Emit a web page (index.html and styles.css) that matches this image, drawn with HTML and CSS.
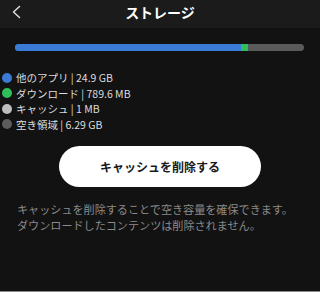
FILE: index.html
```html
<!DOCTYPE html>
<html lang="ja">
<head>
<meta charset="utf-8">
<link rel="stylesheet" href="styles.css">
</head>
<body>
<div class="page">
  <header class="header">
    <svg class="back" width="10" height="14" viewBox="0 0 10 14"><path d="M8.5 1.5 L2.5 7 L8.5 12.5" fill="none" stroke="#ddd" stroke-width="1.5" stroke-linecap="round" stroke-linejoin="round"/></svg>
    <h1 class="title">ストレージ</h1>
  </header>
  <div class="bar">
    <div class="seg blue" style="width:226px"></div>
    <div class="seg green" style="width:7px"></div>
  </div>
  <ul class="legend">
    <li><span class="dot blue"></span>他のアプリ | 24.9 GB</li>
    <li><span class="dot green"></span>ダウンロード | 789.6 MB</li>
    <li><span class="dot light"></span>キャッシュ | 1 MB</li>
    <li><span class="dot dark"></span>空き領域 | 6.29 GB</li>
  </ul>
  <div class="btn-wrap"><button class="btn">キャッシュを削除する</button></div>
  <p class="note">キャッシュを削除することで空き容量を確保できます。<br>ダウンロードしたコンテンツは削除されません。</p>
</div>
</body>
</html>
```
FILE: styles.css
```css
html, body { margin: 0; padding: 0; }
body {
  background: #121212;
  font-family: "Noto Sans CJK JP", "Noto Sans", sans-serif;
  width: 320px;
  height: 292px;
  overflow: hidden;
}
.page {
  height: 291px;
  border-bottom: 1px solid #8a8a8a;
  position: relative;
}
.header {
  height: 28px;
  background: #1b1b1b;
  display: flex;
  align-items: center;
  justify-content: center;
  position: relative;
}
.back {
  position: absolute;
  left: 11px;
  top: 5px;
}
.title {
  margin: 0;
  color: #fff;
  font-size: 14px;
  font-weight: 700;
  line-height: 20px;
  margin-top: -5px;
}
.bar {
  margin: 16px 16px 0 15px;
  height: 7px;
  border-radius: 4px;
  background: #5a5a5a;
  display: flex;
  overflow: hidden;
}
.seg { height: 100%; }
.seg.blue { background: #3a7bd5; }
.seg.green { background: #2fbf5a; }
.legend {
  list-style: none;
  margin: 19px 0 0 2px;
  padding: 0;
}
.legend li {
  display: flex;
  align-items: center;
  height: 15.5px;
  font-size: 10.5px;
  color: #dcdcdc;
  gap: 4px;
}
.dot {
  width: 10px;
  height: 10px;
  border-radius: 50%;
  display: inline-block;
}
.dot.blue { background: #3a7bd5; }
.dot.green { background: #2fbf5a; }
.dot.light { background: #bdbdbd; }
.dot.dark { background: #5c5c5c; }
.btn-wrap {
  display: flex;
  justify-content: center;
  margin-top: 14px;
}
.btn {
  width: 202px;
  height: 41px;
  border: none;
  border-radius: 21px;
  background: #fff;
  color: #1a1a1a;
  font-family: inherit;
  font-size: 12px;
  font-weight: 700;
  padding: 0;
}
.note {
  margin: 14px 0 0 17px;
  color: #8a8a8a;
  font-size: 11.1px;
  line-height: 16px;
}
```
